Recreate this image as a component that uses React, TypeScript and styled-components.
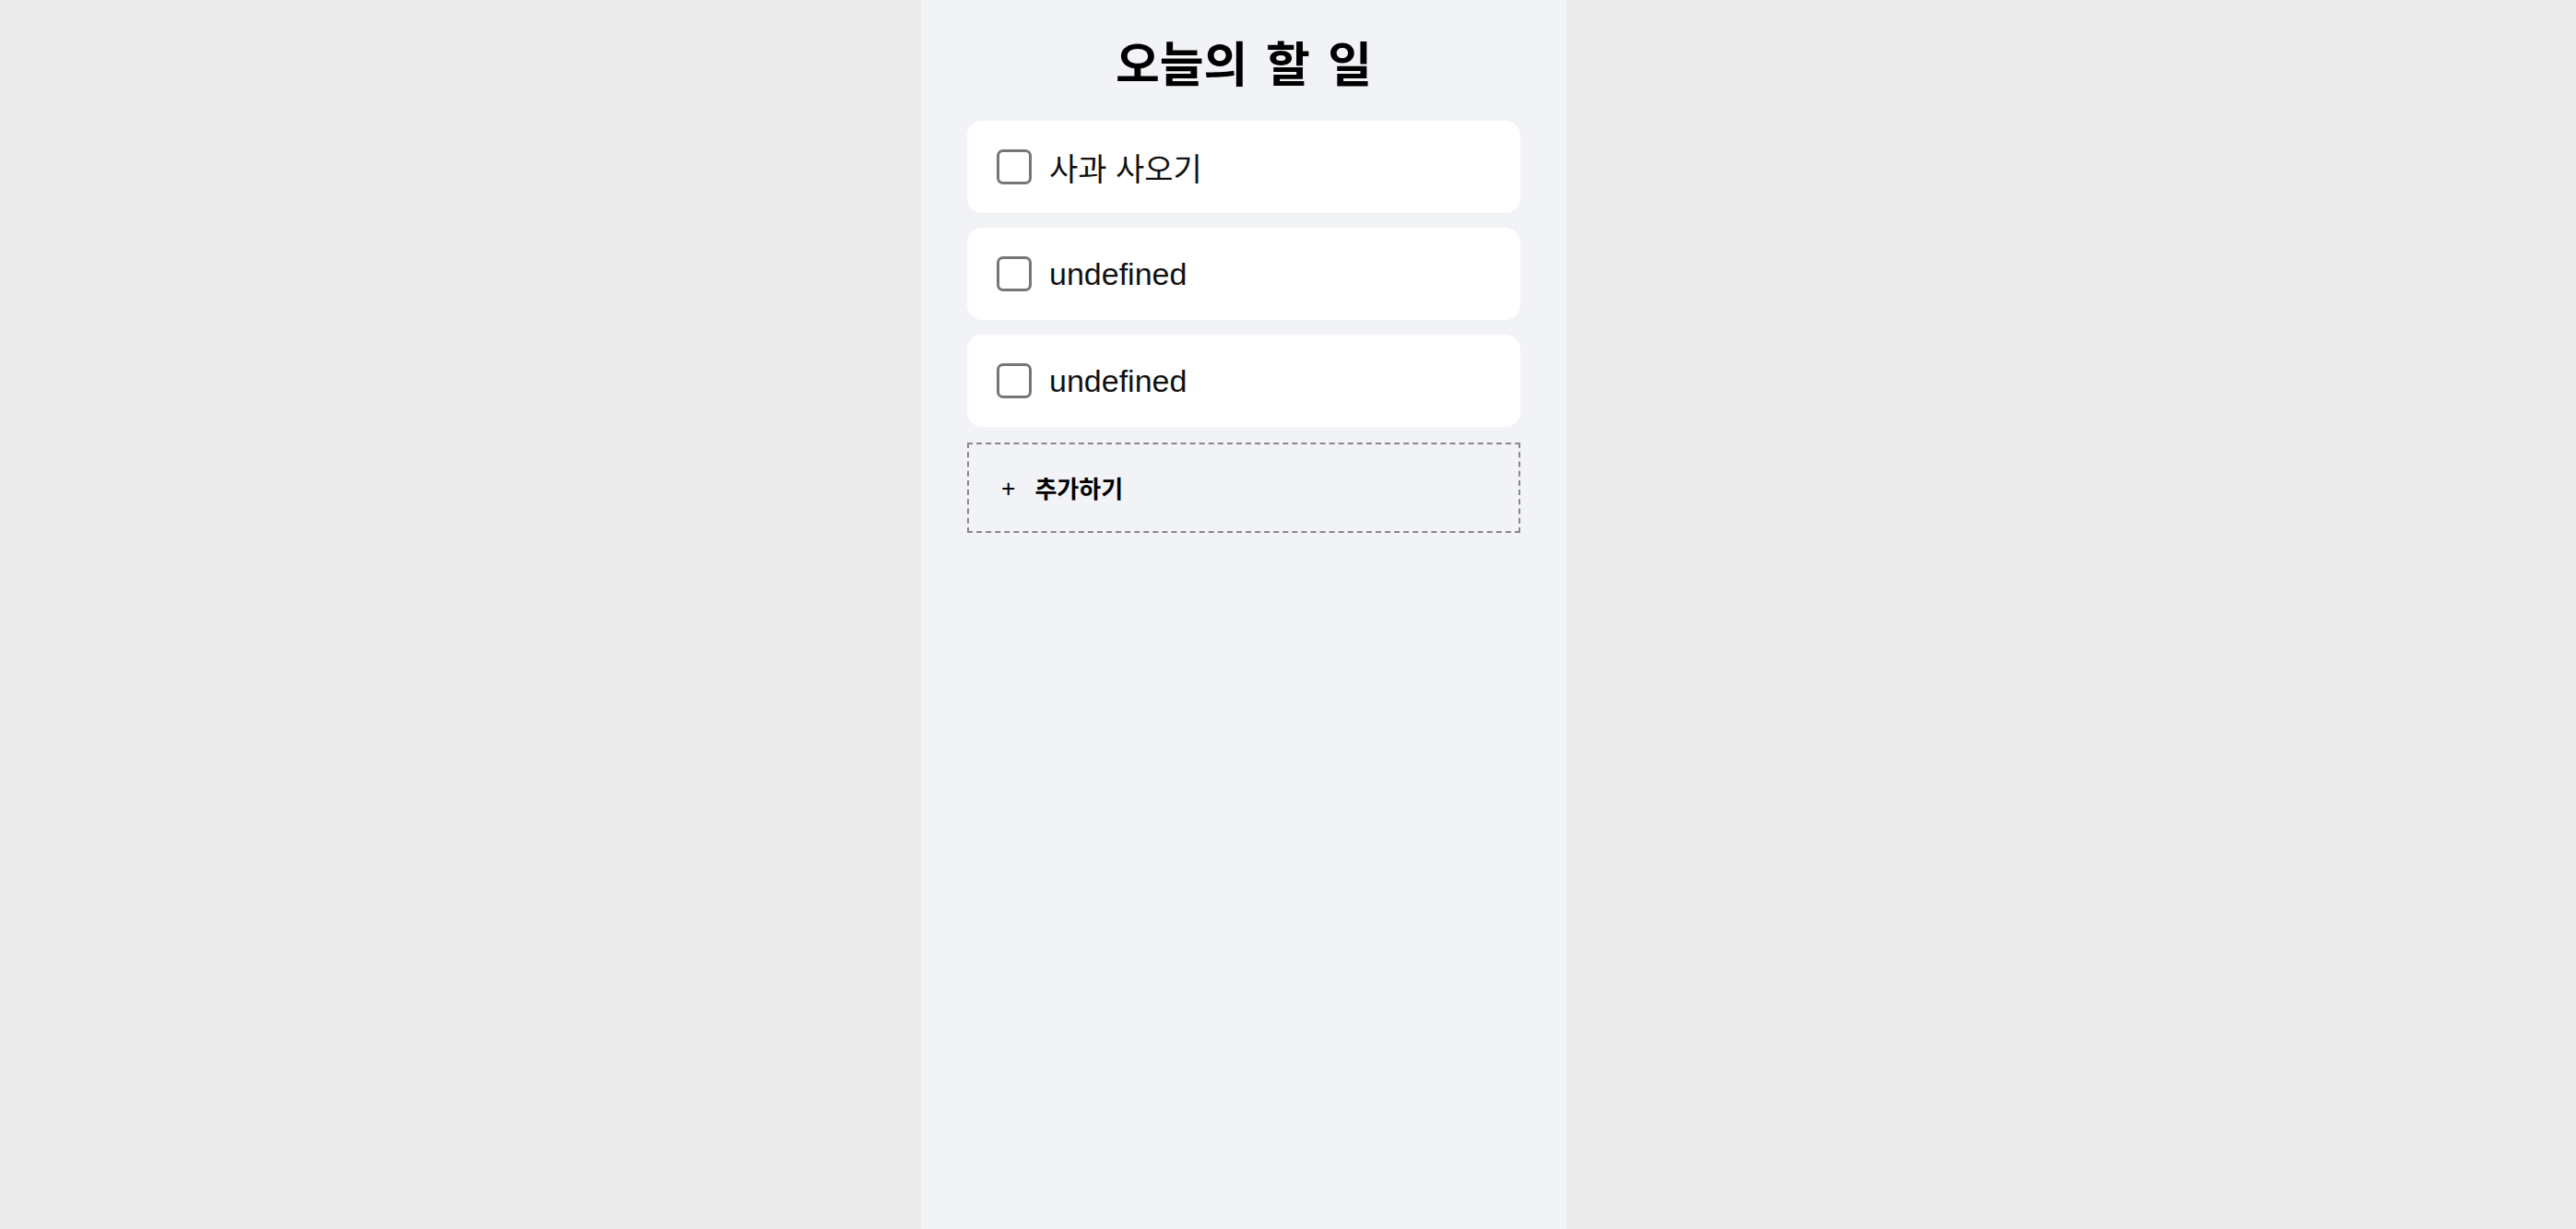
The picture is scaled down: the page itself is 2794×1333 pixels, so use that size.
import React, { useState } from "react";
import styled, { createGlobalStyle } from "styled-components";

const GlobalStyle = createGlobalStyle`
  html, body {
    margin: 0;
    padding: 0;
  }
  body {
    font-family: "Noto Sans", "Noto Sans CJK KR", sans-serif;
    color: #000;
    background: #ebebeb;
  }
`;

const Page = styled.div`
  display: flex;
  justify-content: center;
  padding-right: 96px;
  min-height: 100vh;
  background: #ebebeb;
`;

const Column = styled.main`
  width: 700px;
  box-sizing: border-box;
  min-height: 100vh;
  padding: 0 50px 40px;
  background: #f2f3f7;
`;

const Title = styled.h1`
  margin: 0 0 32px;
  padding-top: 38px;
  line-height: 61px;
  font-size: 52px;
  font-weight: 700;
  word-spacing: 6px;
  text-align: center;
`;

const TodoList = styled.ul`
  display: flex;
  flex-direction: column;
  gap: 16px;
  margin: 0;
  padding: 0;
  list-style: none;
`;

const TodoItem = styled.li`
  display: flex;
  align-items: center;
  gap: 19px;
  height: 100px;
  box-sizing: border-box;
  padding: 0 32px;
  background: #fff;
  border-radius: 16px;
`;

const CheckBox = styled.input`
  appearance: none;
  flex: none;
  width: 38px;
  height: 38px;
  margin: 0;
  box-sizing: border-box;
  border: 3px solid #767676;
  border-radius: 7px;
  background: #fff;
  cursor: pointer;

  &:checked {
    background: #0075ff;
    border-color: #0075ff;
  }
`;

const TodoText = styled.span<{ $done: boolean }>`
  font-family: "Liberation Sans", "Noto Sans CJK KR", sans-serif;
  font-size: 34px;
  color: #111;
  text-decoration: ${(props) => (props.$done ? "line-through" : "none")};
`;

const AddButton = styled.button`
  display: flex;
  align-items: center;
  gap: 21px;
  width: 100%;
  height: 98px;
  box-sizing: border-box;
  margin-top: 17px;
  padding: 0 35px;
  background: transparent;
  border: 2px dashed #888;
  font-family: inherit;
  color: #000;
  cursor: pointer;
`;

const Plus = styled.span`
  font-size: 27px;
`;

const AddLabel = styled.span`
  font-size: 26px;
  font-weight: 700;
`;

interface Todo {
  id: number;
  text?: string;
  done: boolean;
}

function App() {
  const [todos, setTodos] = useState<Todo[]>([
    { id: 1, text: "사과 사오기", done: false },
    { id: 2, text: undefined, done: false },
    { id: 3, text: undefined, done: false },
  ]);

  const toggle = (id: number) =>
    setTodos(todos.map((t) => (t.id === id ? { ...t, done: !t.done } : t)));

  return (
    <>
      <GlobalStyle />
      <Page>
        <Column>
          <Title>오늘의 할 일</Title>
          <TodoList>
            {todos.map((todo) => (
              <TodoItem key={todo.id}>
                <CheckBox
                  type="checkbox"
                  checked={todo.done}
                  onChange={() => toggle(todo.id)}
                />
                <TodoText $done={todo.done}>{String(todo.text)}</TodoText>
              </TodoItem>
            ))}
          </TodoList>
          <AddButton
            onClick={() =>
              setTodos([...todos, { id: Date.now(), text: undefined, done: false }])
            }
          >
            <Plus>+</Plus>
            <AddLabel>추가하기</AddLabel>
          </AddButton>
        </Column>
      </Page>
    </>
  );
}

export default App;
